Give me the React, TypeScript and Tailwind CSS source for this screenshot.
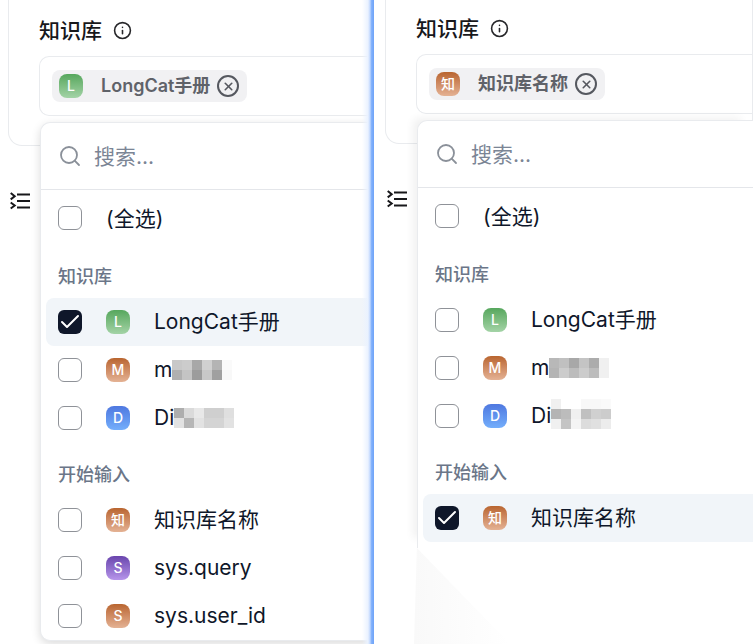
import { Check, Info, Search, X } from "lucide-react";

type Item = {
  letter: string;
  label: string;
  tone: string;
  checked?: boolean;
  mosaic?: string[];
};

const tones = {
  green: "bg-gradient-to-b from-[#56a75d] to-[#a3d3a6]",
  brown: "bg-gradient-to-b from-[#b9652f] to-[#e4b294]",
  blue: "bg-gradient-to-b from-[#4f78e0] to-[#74aefb]",
  purple: "bg-gradient-to-b from-[#6a45ad] to-[#b795ea]",
};

const mosaicLeftM = ["#c8c8c8", "#cccccc", "#a8a8a8", "#d0d0d0", "#b4b4b4", "#fafafa", "#b0b0b0", "#c4c4c4", "#9c9c9c", "#c8c8c8", "#a0a0a0", "#f8f8f8"];
const mosaicLeftD = ["#aeaeae", "#dadada", "#e8e8e8", "#cfcfcf", "#cfcfcf", "#dfdfdf", "#e2e2e2", "#b6b6b6", "#e2e2e2", "#d4d4d4", "#d4d4d4", "#e2e2e2"];
const mosaicRightM = ["#b8b8b8", "#c0c0c0", "#a8a8a8", "#c4c4c4", "#acacac", "#f0f0f0", "#b4b4b4", "#cccccc", "#bcbcbc", "#cccccc", "#bcbcbc", "#f0f0f0"];
const mosaicRightD = ["#f0f0f0", "#ffffff", "#ffffff", "#f8f8f8", "#f8f8f8", "#fafafa", "#b4b4b4", "#bcbcbc", "#f0f0f0", "#c0c0c0", "#d0d0d0", "#cccccc", "#f0f0f0", "#c4c4c4", "#f4f4f4", "#dcdcdc", "#e0e0e0", "#ececec"];

function Checkbox({ checked }: { checked?: boolean }) {
  if (checked) {
    return (
      <span className="flex h-6 w-6 shrink-0 items-center justify-center rounded-[6px] bg-[#0f172a]">
        <Check size={24} strokeWidth={2} className="text-white" />
      </span>
    );
  }
  return <span className="h-6 w-6 shrink-0 rounded-[6px] border border-[#8f9298] bg-white" />;
}

function Avatar({ letter, tone }: { letter: string; tone: string }) {
  return (
    <span className={`flex h-6 w-6 shrink-0 items-center justify-center rounded-[8px] text-[14px] font-medium leading-none text-white ${tone}`}>
      {letter}
    </span>
  );
}

function Mosaic({ cells }: { cells: string[] }) {
  return (
    <span className={`grid w-[60px] auto-rows-[10px] grid-cols-6 ${cells.length > 12 ? "-translate-y-[2px]" : ""}`}>
      {cells.map((c, i) => (
        <span key={i} style={{ backgroundColor: c }} />
      ))}
    </span>
  );
}

function Row({ item }: { item: Item }) {
  return (
    <div className={`flex h-12 items-center rounded-l-lg pl-3 ${item.checked ? "bg-[#f1f5f9]" : ""}`}>
      <Checkbox checked={item.checked} />
      <span className="ml-6">
        <Avatar letter={item.letter} tone={item.tone} />
      </span>
      <span className="ml-6 flex items-center whitespace-nowrap pb-[1px] text-[21px] leading-none text-[#0f172a]">
        {item.label}
        {item.mosaic && <Mosaic cells={item.mosaic} />}
      </span>
    </div>
  );
}

function Heading({ children }: { children: string }) {
  return <div className="flex h-[34px] items-center px-3 pb-[2px] text-[18px] font-medium text-[#6b7688]">{children}</div>;
}

function Panel({
  chipLetter,
  chipLabel,
  chipTone,
  knowledge,
  input,
  shift,
  width,
  first,
}: {
  chipLetter: string;
  chipLabel: string;
  chipTone: string;
  knowledge: Item[];
  input: Item[];
  shift: string;
  width: string;
  first?: boolean;
}) {
  return (
    <div className={`relative h-[644px] shrink-0 overflow-hidden bg-white ${width}`}>
      {/* page behind the dropdown */}
      <div className={shift}>
        <div className="ml-2 h-[146px] rounded-b-[14px] border border-t-0 border-[#e9ebee] pl-[30px]">
          <div className="flex h-[56px] items-center pt-[4px] text-[21px] font-medium leading-none text-[#18181b]">
            知识库
            <Info size={19} strokeWidth={2} className="ml-[11px] mt-[1px] text-[#27272a]" />
          </div>
          <div className="flex h-[60px] items-center rounded-l-[10px] border border-r-0 border-[#e9ebee] pl-3">
            <div className="flex h-8 items-center rounded-lg bg-[#f1f1f3] pl-[7px] pr-2">
              <Avatar letter={chipLetter} tone={chipTone} />
              <span className="ml-[18px] whitespace-nowrap text-[18px] font-semibold leading-none text-[#5f6269]">{chipLabel}</span>
              <span className="ml-[7px] flex h-[22px] w-[22px] items-center justify-center rounded-full border-2 border-[#55585f]">
                <X size={13} strokeWidth={3} className="text-[#55585f]" />
              </span>
            </div>
          </div>
        </div>
        <div className="ml-[10px] mt-[46px] h-[18px] w-5 text-[#18181b]">
          <svg viewBox="0 0 20 18" className="h-[18px] w-5" fill="none" stroke="currentColor" strokeWidth="2">
            <path d="M7 2.5h13M7 9h13M7 15.5h13" />
            <path d="M.7 1l4 3.2-4 3.2M.7 10.5l4 3-4 3" />
          </svg>
        </div>
      </div>

      {/* dropdown */}
      <div
        className={`absolute left-10 right-0 rounded-l-[10px] border border-r-0 border-[#e9ebee] bg-white ${
          first
            ? "top-[122px] h-[519px] shadow-[0_3px_10px_rgba(0,0,0,0.14)]"
            : "top-[120px] h-[428px] rounded-bl-none border-b-0 shadow-[-8px_-6px_8px_-4px_rgba(0,0,0,0.06)]"
        }`}
      >
        <div className="flex h-[67px] items-center border-b border-[#e4e6ea] pl-[17px]">
          <Search size={24} strokeWidth={1.8} className="text-[#8a9099]" />
          <span className="ml-[12px] text-[21px] leading-none text-[#7b8595]">搜索...</span>
        </div>
        <div className="flex h-[56px] items-center pl-[17px]">
          <Checkbox />
          <span className="ml-6 text-[21px] leading-none text-[#0f172a]">(全选)</span>
        </div>
        <div className="mt-[14px] pl-[5px]">
          <Heading>知识库</Heading>
          <div className="mt-[4px]">
            {knowledge.map((item) => (
              <Row key={item.letter} item={item} />
            ))}
          </div>
          <div className="mt-[16px]">
            <Heading>开始输入</Heading>
          </div>
          <div className="mt-[4px]">
            {input.map((item) => (
              <Row key={item.label} item={item} />
            ))}
          </div>
        </div>
      </div>

      {!first && (
        <div className="absolute bottom-0 left-[37px] h-[96px] w-[96px] bg-gradient-to-r from-[#f9f9f9] to-white [clip-path:polygon(3%_0,100%_100%,0_100%)]" />
      )}
      {first && (
        <div className="absolute inset-y-0 right-0 w-3 bg-[linear-gradient(to_right,#ffffff00_0%,#eaf2ff_50%,#c5dafe_66%,#80b0fb_80%,#6ea3f8_100%)]" />
      )}
    </div>
  );
}

export default function App() {
  return (
    <div className="flex h-[644px] w-[753px] overflow-hidden bg-white [font-family:Inter,'Noto_Sans_CJK_SC',sans-serif]">
      <Panel
        width="w-[374px]"
        shift=""
        first
        chipLetter="L"
        chipLabel="LongCat手册"
        chipTone={tones.green}
        knowledge={[
          { letter: "L", label: "LongCat手册", tone: tones.green, checked: true },
          { letter: "M", label: "m", tone: tones.brown, mosaic: mosaicLeftM },
          { letter: "D", label: "Di", tone: tones.blue, mosaic: mosaicLeftD },
        ]}
        input={[
          { letter: "知", label: "知识库名称", tone: tones.brown },
          { letter: "S", label: "sys.query", tone: tones.purple },
          { letter: "S", label: "sys.user_id", tone: tones.brown },
        ]}
      />
      <div className="w-[3px] shrink-0" />
      <Panel
        width="w-[376px]"
        shift="-mt-[2px]"
        chipLetter="知"
        chipLabel="知识库名称"
        chipTone={tones.brown}
        knowledge={[
          { letter: "L", label: "LongCat手册", tone: tones.green },
          { letter: "M", label: "m", tone: tones.brown, mosaic: mosaicRightM },
          { letter: "D", label: "Di", tone: tones.blue, mosaic: mosaicRightD },
        ]}
        input={[{ letter: "知", label: "知识库名称", tone: tones.brown, checked: true }]}
      />
    </div>
  );
}
